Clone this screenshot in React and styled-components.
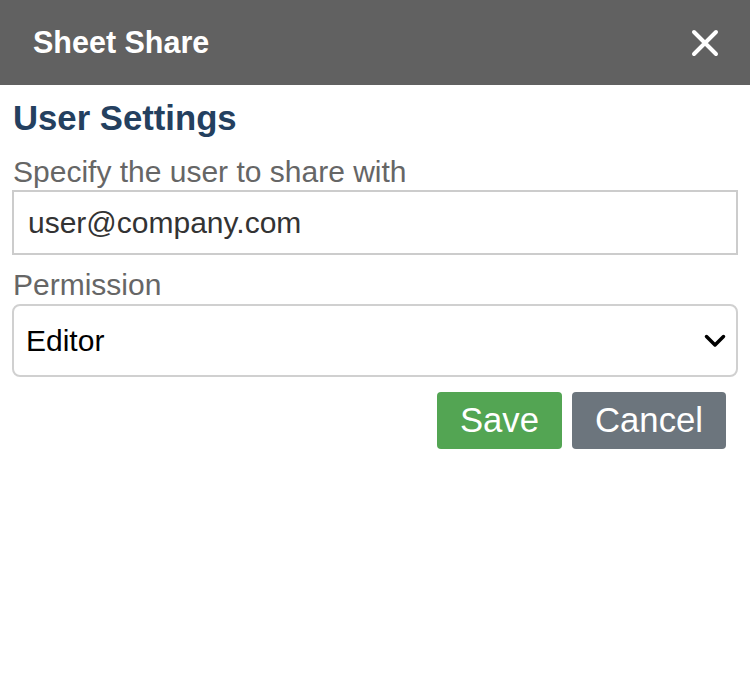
import styled, { createGlobalStyle } from "styled-components";

const GlobalStyle = createGlobalStyle`
  body {
    margin: 0;
    background: #fff;
    font-family: "Liberation Sans", Arial, Helvetica, sans-serif;
  }
`;

const Container = styled.div`
  width: 750px;
`;

const Header = styled.div`
  height: 85px;
  background: #616161;
  display: flex;
  align-items: center;
  justify-content: space-between;
  padding: 0 31px 0 33px;
  box-sizing: border-box;
`;

const HeaderTitle = styled.h1`
  margin: 0;
  color: #fff;
  font-size: 30.5px;
  font-weight: 700;
`;

const CloseButton = styled.button`
  border: none;
  background: none;
  padding: 0;
  display: flex;
  cursor: pointer;
`;

const Body = styled.div`
  padding: 14px 12px 0;
`;

const Title = styled.h2`
  margin: 0 0 17px 1px;
  color: #24405f;
  font-size: 34.7px;
  font-weight: 700;
`;

const Label = styled.label`
  display: block;
  margin-left: 1px;
  color: #666;
  font-size: 30px;
`;

const Input = styled.input`
  display: block;
  width: 100%;
  height: 65px;
  box-sizing: border-box;
  margin: 1px 0 13px;
  padding: 0 14px;
  border: 2px solid #ccc;
  border-radius: 0;
  color: #333;
  font-family: inherit;
  font-size: 30px;
  outline: none;
`;

const SelectWrap = styled.div`
  position: relative;
  margin: 2px 0 15px;
`;

const Select = styled.select`
  display: block;
  width: 100%;
  height: 73px;
  box-sizing: border-box;
  padding: 0 12px;
  border: 2px solid #d0d0d0;
  border-radius: 8px;
  background: #fff;
  color: #000;
  font-family: inherit;
  font-size: 30px;
  appearance: none;
  outline: none;
`;

const Chevron = styled.svg`
  position: absolute;
  right: 12px;
  top: 50%;
  transform: translateY(-50%);
  pointer-events: none;
`;

const Actions = styled.div`
  display: flex;
  justify-content: flex-end;
  gap: 10px;
  padding-right: 12px;
`;

const Button = styled.button`
  height: 57px;
  padding: 0 23px;
  border: none;
  border-radius: 4px;
  background: ${(p) => p.$bg};
  color: #fff;
  font-family: inherit;
  font-size: 34.7px;
  cursor: pointer;
`;

const App = () => {
  return (
    <Container>
      <GlobalStyle />
      <Header>
        <HeaderTitle>Sheet Share</HeaderTitle>
        <CloseButton aria-label="Close">
          <svg width="28" height="28" viewBox="0 0 28 28">
            <path
              d="M3 3 L25 25 M25 3 L3 25"
              stroke="#fff"
              strokeWidth="4"
              strokeLinecap="round"
              fill="none"
            />
          </svg>
        </CloseButton>
      </Header>
      <Body>
        <Title>User Settings</Title>
        <Label htmlFor="user">Specify the user to share with</Label>
        <Input id="user" defaultValue="user@company.com" />
        <Label htmlFor="perm">Permission</Label>
        <SelectWrap>
          <Select id="perm" defaultValue="editor">
            <option value="viewer">Viewer</option>
            <option value="editor">Editor</option>
            <option value="owner">Owner</option>
          </Select>
          <Chevron width="22" height="14" viewBox="0 0 22 14">
            <path
              d="M2.5 2.5 L11 11 L19.5 2.5"
              stroke="#000"
              strokeWidth="3.5"
              strokeLinecap="round"
              strokeLinejoin="round"
              fill="none"
            />
          </Chevron>
        </SelectWrap>
        <Actions>
          <Button $bg="#53a553">Save</Button>
          <Button $bg="#6c757d">Cancel</Button>
        </Actions>
      </Body>
    </Container>
  );
};

export default App;
